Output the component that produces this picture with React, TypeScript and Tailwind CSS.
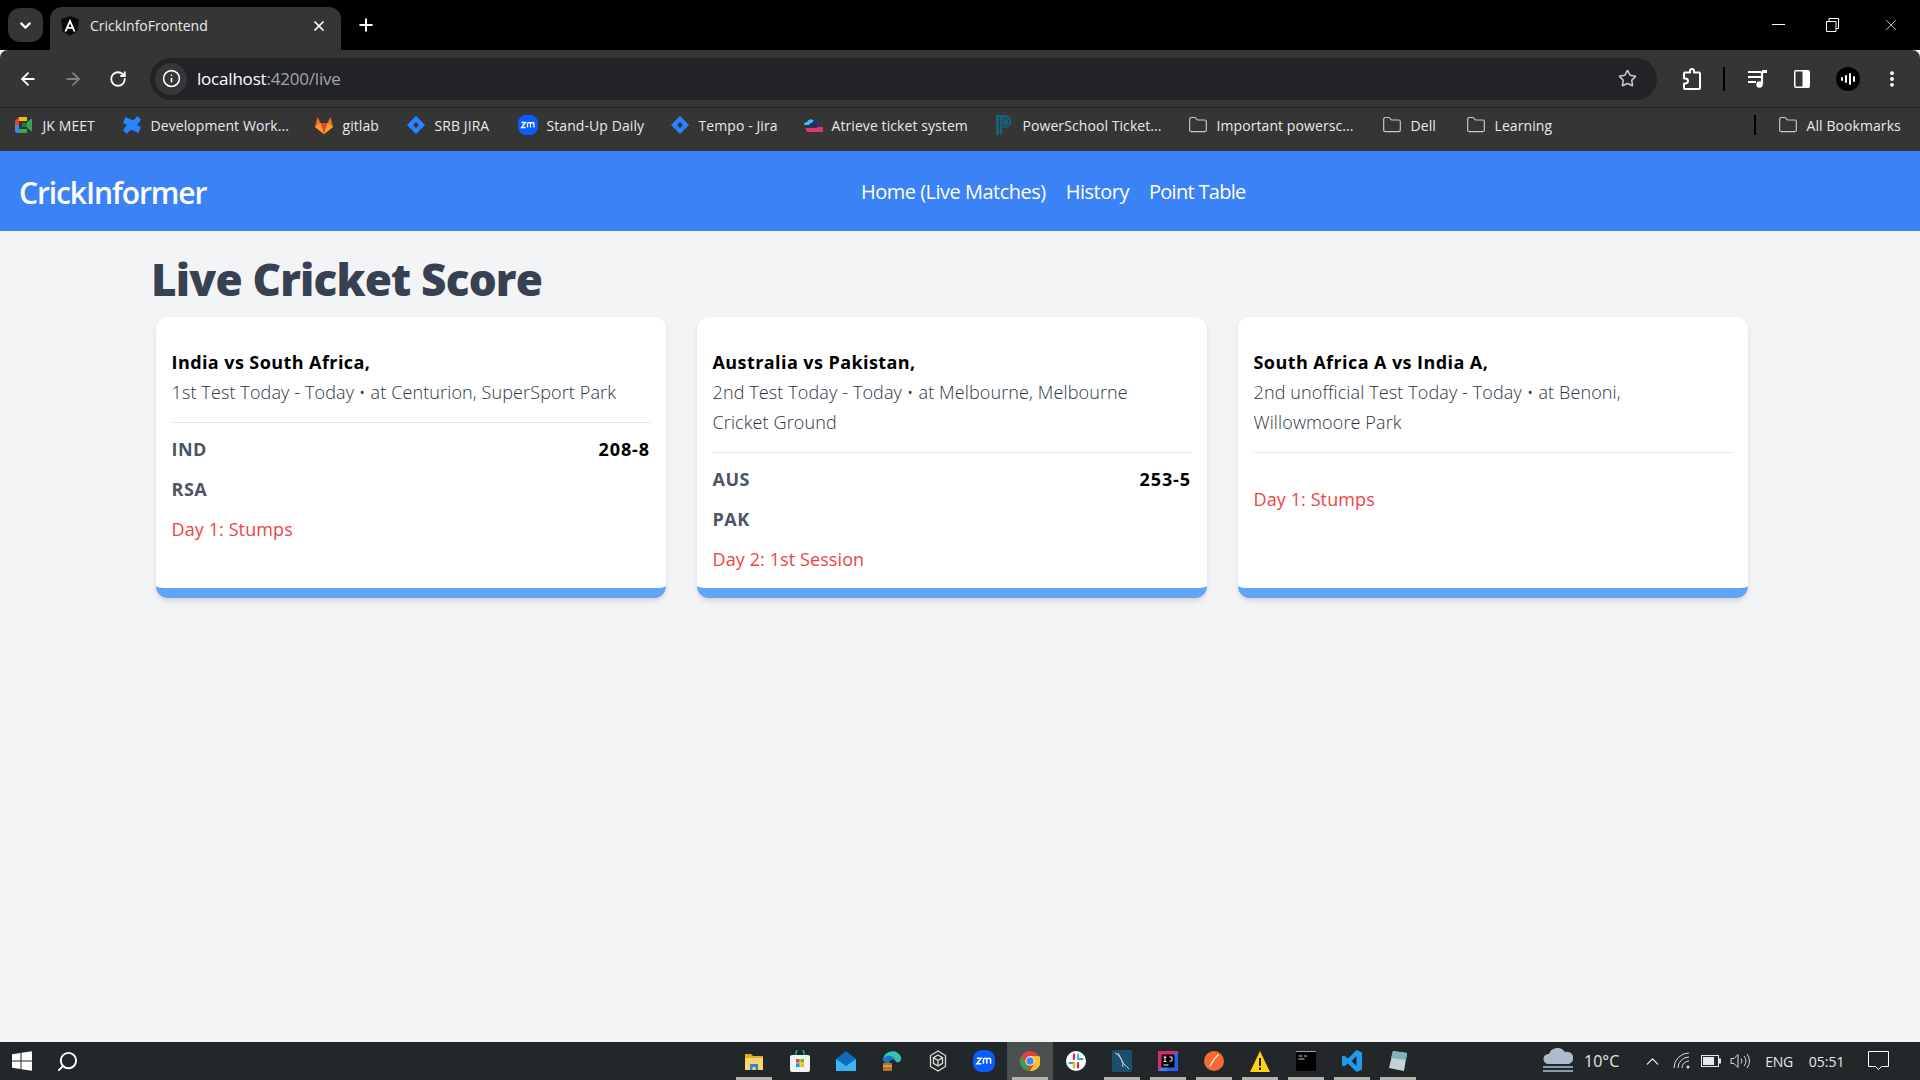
import { ChevronDown, X, Plus, ArrowLeft, ArrowRight, RotateCw, Info, Star, EllipsisVertical, Folder, Search, ChevronUp } from 'lucide-react';

type Match = {
  title: string;
  sub: string;
  teams: { name: string; score?: string }[];
  status: string;
};

const matches: Match[] = [
  {
    title: 'India vs South Africa,',
    sub: '1st Test Today - Today • at Centurion, SuperSport Park',
    teams: [{ name: 'IND', score: '208-8' }, { name: 'RSA' }],
    status: 'Day 1: Stumps',
  },
  {
    title: 'Australia vs Pakistan,',
    sub: '2nd Test Today - Today • at Melbourne, Melbourne Cricket Ground',
    teams: [{ name: 'AUS', score: '253-5' }, { name: 'PAK' }],
    status: 'Day 2: 1st Session',
  },
  {
    title: 'South Africa A vs India A,',
    sub: '2nd unofficial Test Today - Today • at Benoni, Willowmoore Park',
    teams: [],
    status: 'Day 1: Stumps',
  },
];

function MeetIcon() {
  return (
    <svg width="18" height="16" viewBox="0 0 18 16">
      <path d="M0 4 4 0h8v4H4v4H0z" fill="#ea4335" />
      <path d="M0 8h4v8H2a2 2 0 0 1-2-2z" fill="#4285f4" />
      <path d="M4 0h7a1 1 0 0 1 1 1v3H4z" fill="#fbbc04" />
      <path d="M4 12h8v3a1 1 0 0 1-1 1H4z" fill="#34a853" />
      <path d="M12 5v6l5 3.500V1.500z" fill="#34a853" />
      <path d="M4 4h8v8H4z" fill="#353535" />
      <path d="M7 6h5v4H7z" fill="#188038" />
    </svg>
  );
}

function ConfluenceIcon() {
  return (
    <svg width="20" height="20" viewBox="0 0 20 20">
      <path d="M1 15.500c3-5 5-7.500 8-7.500 2 0 5 1.500 10 4l-2.500 6c-3-1.500-6-3-7.500-3-1 0-2 1-4 4z" fill="#2684ff" />
      <path d="M19 4.500c-3 5-5 7.500-8 7.500-2 0-5-1.500-10-4l2.500-6c3 1.500 6 3 7.500 3 1 0 2-1 4-4z" fill="#2684ff" />
    </svg>
  );
}

function GitlabIcon() {
  return (
    <svg width="20" height="20" viewBox="0 0 20 20">
      <path d="M10 19 1 12 3.500 2 6.500 8h7L16.500 2 19 12z" fill="#fc6d26" />
      <path d="M10 19 6.500 8h7z" fill="#e24329" />
      <path d="M1 12 6.500 8 10 19z" fill="#fca326" />
      <path d="M19 12 13.500 8 10 19z" fill="#fca326" />
    </svg>
  );
}

function JiraIcon() {
  return (
    <svg width="18" height="18" viewBox="0 0 18 18">
      <path d="M9 0 18 9l-9 9-9-9z" fill="#2684ff" />
      <path d="M9 6l3 3-3 3-3-3z" fill="#353535" />
    </svg>
  );
}

function ZoomIcon({ size = 20 }: { size?: number }) {
  return (
    <svg width={size} height={size} viewBox="0 0 20 20">
      <rect width="20" height="20" rx="8" fill="#0b5cff" />
      <path d="M3.500 7.500h4l-4 5h4M9.500 12.500v-5M9.500 9c0-2 3-2 3 0v3.500M12.500 9c0-2 3.500-2 3.500 0v3.500" fill="none" stroke="#fff" strokeWidth="1.300" />
    </svg>
  );
}

function AtrieveIcon() {
  return (
    <svg width="20" height="16" viewBox="0 0 20 16">
      <path d="M1 8a3 3 0 0 1 3-3 4 4 0 0 1 7-1 3 3 0 0 1 4 4z" fill="#38bdf8" />
      <path d="M6 10a3 3 0 0 1 3-4 3 3 0 0 1 6 1v3z" fill="#1e2f6b" />
      <path d="M2 11h11l2-1h5v5H4z" fill="#e0356f" />
    </svg>
  );
}

function PowerSchoolIcon() {
  return (
    <svg width="18" height="22" viewBox="0 0 18 22">
      <path d="M1 1h9a6.500 6.500 0 0 1 0 13H7v7H1z" fill="#14627c" />
      <path d="M4.500 3.500V21M8 4h2a4 4 0 0 1 0 8H8z" fill="none" stroke="#353535" strokeWidth="1" />
    </svg>
  );
}

function AngularIcon() {
  return (
    <svg width="18" height="20" viewBox="0 0 16 18">
      <path d="M8 0 0 3l1.200 10.500L8 18l6.800-4.500L16 3z" fill="#0b0b0f" />
      <path d="M8 2.500 3 14h1.900l1-2.500h4.200l1 2.500H13zm-1.400 7.500L8 6.500 9.400 10z" fill="#fff" />
    </svg>
  );
}

function Bookmark({ icon, label, w }: { icon: React.ReactNode; label: string; w: string }) {
  return (
    <div className={`flex items-center h-full shrink-0 ${w}`}>
      <div className="w-5 flex justify-center shrink-0">{icon}</div>
      <span className="ml-[8.5px] text-[14px] text-[#e8eaed] whitespace-nowrap tracking-[0.08px]">{label}</span>
    </div>
  );
}

function FolderIcon() {
  return <Folder size={20} strokeWidth={1.4} className="text-[#c7c7c7]" />;
}

function TabStrip() {
  return (
    <div className="h-[50px] bg-black flex shrink-0 relative">
      <div className="ml-2 mt-2 w-[35px] h-[34px] rounded-xl bg-[#353535] flex items-center justify-center">
        <ChevronDown size={17} strokeWidth={3} className="text-white" />
      </div>
      <div className="ml-[7px] mt-[7px] w-[291px] h-[43px] rounded-t-xl bg-[#353535] flex items-center pl-[11px] pr-[14px] pb-[6px] relative">
        <AngularIcon />
        <span className="ml-[11px] text-[14px] text-[#e8eaed] flex-1">CrickInfoFrontend</span>
        <X size={16} strokeWidth={2.6} className="text-white" />
      </div>
      <Plus size={20} strokeWidth={2.4} className="ml-[15px] mt-[15px] text-white" />
      <div className="ml-auto flex text-white">
        <span className="mt-[24px] mr-[41px] w-[13px] h-px bg-white" />
        <svg width="13" height="14" viewBox="0 0 13 14" className="mt-[18px] mr-[43px]">
          <path d="M.5 3.500h9.500v10H.5zM3 3.500v-3h9.500v10H10" fill="none" stroke="#fff" />
        </svg>
        <X size={18} strokeWidth={1} className="mt-[16px] mr-5" />
      </div>
    </div>
  );
}

function Toolbar() {
  return (
    <div className="h-[57px] bg-[#353535] rounded-t-lg flex items-center shrink-0">
      <ArrowLeft size={20} strokeWidth={2.2} className="ml-[18px] text-white" />
      <ArrowRight size={20} strokeWidth={2.2} className="ml-[25px] text-[#808080]" />
      <RotateCw size={18} strokeWidth={2.4} className="ml-[26px] text-white" />
      <div className="ml-[23px] w-[1507px] h-[42px] rounded-full bg-[#222326] flex items-center pl-[5px] pr-[20px]">
        <div className="w-[32px] h-[32px] rounded-full bg-[#363739] flex items-center justify-center">
          <Info size={19} strokeWidth={2} className="text-white" />
        </div>
        <span className="ml-[10px] text-[17px] text-white tracking-[-0.2px] flex-1">
          localhost<span className="text-[#a4a5a7]">:4200/live</span>
        </span>
        <Star size={19} strokeWidth={2} className="text-[#c8c8c8]" />
      </div>
      <svg width="22" height="22" viewBox="0 0 22 22" className="ml-[23px]">
        <path d="M8 4.500h2V3a2 2 0 0 1 4 0v1.500h5a1 1 0 0 1 1 1V20a1 1 0 0 1-1 1H5a1 1 0 0 1-1-1v-4.500h1.500a2.500 2.500 0 0 0 0-5H4V5.500a1 1 0 0 1 1-1z" fill="none" stroke="#fff" strokeWidth="2" strokeLinejoin="round" />
      </svg>
      <div className="ml-[21px] w-[2px] h-6 bg-black" />
      <svg width="22" height="20" viewBox="0 0 22 20" className="ml-[22px]">
        <path d="M1 3h13M1 8h13M1 13h8" stroke="#fff" strokeWidth="2.200" />
        <path d="M15 2.500V15" stroke="#fff" strokeWidth="2.200" />
        <path d="M15 1h5v3h-5z" fill="#fff" />
        <circle cx="12.500" cy="15.500" r="3.200" fill="#fff" />
      </svg>
      <svg width="18" height="20" viewBox="0 0 18 20" className="ml-[24px]">
        <rect x="1" y="1" width="16" height="18" rx="2" fill="#fff" />
        <rect x="2.500" y="2.500" width="7" height="15" fill="#353535" />
      </svg>
      <div className="ml-[25px] w-6 h-6 rounded-full bg-black flex items-center justify-center gap-[2px]">
        <span className="w-[2px] h-[4px] bg-white rounded-full" />
        <span className="w-[2px] h-[8px] bg-white rounded-full" />
        <span className="w-[2px] h-[12px] bg-white rounded-full" />
        <span className="w-[2px] h-[6px] bg-white rounded-full" />
      </div>
      <EllipsisVertical size={20} strokeWidth={2.6} className="ml-[22px] text-white" />
    </div>
  );
}

function BookmarksBar() {
  return (
    <div className="h-[44px] bg-[#353535] border-t border-[#232323] flex items-center pl-[14px] pb-[9px] shrink-0">
      <Bookmark icon={<MeetIcon />} label="JK MEET" w="w-[108px]" />
      <Bookmark icon={<ConfluenceIcon />} label="Development Work..." w="w-[192px]" />
      <Bookmark icon={<GitlabIcon />} label="gitlab" w="w-[92px]" />
      <Bookmark icon={<JiraIcon />} label="SRB JIRA" w="w-[112px]" />
      <Bookmark icon={<ZoomIcon />} label="Stand-Up Daily" w="w-[152px]" />
      <Bookmark icon={<JiraIcon />} label="Tempo - Jira" w="w-[133px]" />
      <Bookmark icon={<AtrieveIcon />} label="Atrieve ticket system" w="w-[191px]" />
      <Bookmark icon={<PowerSchoolIcon />} label="PowerSchool Ticket..." w="w-[194px]" />
      <Bookmark icon={<FolderIcon />} label="Important powersc..." w="w-[194px]" />
      <Bookmark icon={<FolderIcon />} label="Dell" w="w-[84px]" />
      <Bookmark icon={<FolderIcon />} label="Learning" w="w-[288px]" />
      <div className="w-[2px] h-5 bg-black shrink-0" />
      <div className="ml-[22px] h-full">
        <Bookmark icon={<FolderIcon />} label="All Bookmarks" w="w-[121px]" />
      </div>
    </div>
  );
}

function MatchCard({ match }: { match: Match }) {
  return (
    <div className="bg-white rounded-xl border-b-[10px] border-[#60a5fa] shadow-md pl-[15.5px] pr-4 pt-[30px] pb-[9px]">
      <h3 className="text-[18px] leading-[30px] font-bold text-black tracking-[0.42px]">{match.title}</h3>
      <p className="text-[18px] leading-[30px] font-light text-[#2b3544] tracking-[0.12px] pr-5">{match.sub}</p>
      <div className="mt-[15px] border-t-[1.500px] border-[#e5e7eb] pt-1.5">
        {match.teams.map((team) => (
          <div key={team.name} className="h-10 flex items-center justify-between text-[18px] font-bold">
            <span className="text-[#4b5563] tracking-[0.5px]">{team.name}</span>
            {team.score && <span className="text-black tracking-[0.9px]">{team.score}</span>}
          </div>
        ))}
        {match.teams.length === 0 && <div className="h-5" />}
        <div className="h-10 flex items-center text-[18px] font-normal text-[#ef4444] tracking-[0.1px]">{match.status}</div>
      </div>
    </div>
  );
}

function TrayIcon({ children, x }: { children: React.ReactNode; x: string }) {
  return <div className={`w-[46px] h-full flex items-center justify-center relative shrink-0 ${x}`}>{children}</div>;
}

function Underline() {
  return <span className="absolute bottom-0 left-[5px] right-[5px] h-[3px] bg-[#b3b3ae]" />;
}

function Taskbar() {
  return (
    <div className="h-[38px] bg-[#222829] flex items-center shrink-0">
      <svg width="20" height="20" viewBox="0 0 20 20" className="ml-[12px]">
        <path d="M0 3.200 8.500 2v7.500H0zM9.500 1.800 20 .2v9.300H9.500zM0 10.500h8.500V18L0 16.800zM9.500 10.500H20v9.300L9.500 18.200z" fill="#fff" />
      </svg>
      <Search size={23} strokeWidth={2} className="ml-[24px] -scale-x-100 text-white" />
      <div className="ml-[652px] h-full flex">
        <TrayIcon x="">
          <svg width="20" height="19" viewBox="0 0 20 19">
            <path d="M1 2h6l2 2h10v3H1z" fill="#e8a92c" />
            <path d="M1 6h18v12H1z" fill="#fbd46d" />
            <path d="M6 18v-6h8v6h-2.500v-3h-3v3z" fill="#2a87d8" />
          </svg>
          <Underline />
        </TrayIcon>
        <TrayIcon x="">
          <svg width="20" height="22" viewBox="0 0 20 22">
            <path d="M6 6V3a4 4 0 0 1 8 0v3" fill="none" stroke="#22b8d6" strokeWidth="1.300" />
            <rect y="5" width="20" height="17" rx="2" fill="#f3f3f3" />
            <path d="M6 9h3.700v3.700H6z" fill="#f25022" />
            <path d="M10.300 9H14v3.700h-3.700z" fill="#7fba00" />
            <path d="M6 13.300h3.700V17H6z" fill="#00a4ef" />
            <path d="M10.300 13.300H14V17h-3.700z" fill="#ffb900" />
          </svg>
        </TrayIcon>
        <TrayIcon x="">
          <svg width="20" height="20" viewBox="0 0 20 20">
            <path d="M0 8 10 0l10 8v11H0z" fill="#0f6cbd" />
            <path d="M0 8l10 7 10-7v12H0z" fill="#3bb4f0" />
          </svg>
        </TrayIcon>
        <TrayIcon x="">
          <svg width="20" height="22" viewBox="0 0 20 22">
            <path d="M1 9a9.500 9.500 0 0 1 18-2c1 4-2 6-5 5-1-3-5-5-8-3-2 1-4 1-5 0z" fill="#35c1b1" />
            <path d="M1 9c3-5 10-4 12 1-3-1-6 0-6 4-4-1-6-2-6-5z" fill="#1976c9" />
            <rect x="1" y="13" width="9" height="8" rx="1" fill="#b8722c" />
            <path d="M1 16h9" stroke="#f2c66d" />
          </svg>
        </TrayIcon>
        <TrayIcon x="">
          <svg width="18" height="22" viewBox="0 0 18 22" fill="none" stroke="#d9d9d9" strokeWidth="1.300">
            <path d="M9 1 16.500 5.500v11L9 21 1.500 16.500v-11z" />
            <path d="M9 5l4.500 2.600v5.800L9 16l-4.500-2.600V7.600zM4.500 7.600 9 10.500l4.500-2.900M9 10.500V16" />
          </svg>
        </TrayIcon>
        <TrayIcon x="">
          <ZoomIcon size={22} />
        </TrayIcon>
        <TrayIcon x="bg-[#4a5050]">
          <svg width="20" height="20" viewBox="0 0 20 20">
            <circle cx="10" cy="10" r="10" fill="#db4437" />
            <path d="M10 5h9.300A10 10 0 0 1 10 20l4.500-8z" fill="#fbc02d" />
            <path d="M1.300 5 6 12.500 10 20A10 10 0 0 1 1.300 5z" fill="#3d9c47" />
            <circle cx="10" cy="10" r="4.700" fill="#fff" />
            <circle cx="10" cy="10" r="3.700" fill="#4285f4" />
          </svg>
          <Underline />
        </TrayIcon>
        <TrayIcon x="">
          <svg width="20" height="20" viewBox="0 0 20 20">
            <circle cx="10" cy="10" r="10" fill="#fff" />
            <path d="M8 3.500v4.500M12 12v4.500" stroke="#e01e5a" strokeWidth="2.200" strokeLinecap="round" />
            <path d="M3.500 12H8M12 8h4.500" stroke="#2eb67d" strokeWidth="2.200" strokeLinecap="round" />
            <path d="M12 3.500V8" stroke="#36c5f0" strokeWidth="2.200" strokeLinecap="round" />
            <path d="M8 12v4.500" stroke="#ecb22e" strokeWidth="2.200" strokeLinecap="round" />
          </svg>
        </TrayIcon>
        <TrayIcon x="">
          <svg width="20" height="22" viewBox="0 0 20 22">
            <rect width="20" height="22" rx="2" fill="#1f4e6c" />
            <path d="M3 3c6 3 7 9 9 11 2 2 3 3 5 5M6 3c3 5 5 9 5 14" fill="none" stroke="#c7d6df" strokeWidth="1" />
          </svg>
          <Underline />
        </TrayIcon>
        <TrayIcon x="">
          <svg width="20" height="20" viewBox="0 0 20 20">
            <rect width="20" height="20" fill="#3b82f6" />
            <path d="M0 0h20L0 20z" fill="#d62b6d" />
            <path d="M20 0v20H8z" fill="#2563eb" />
            <rect x="3.500" y="3.500" width="13" height="13" fill="#000" />
            <path d="M5.500 6h3M7 6v4.500M5.500 10.500h3M11.500 6h2.500v3.500c0 1-2 1-2.500 .5M5.500 14h5" fill="none" stroke="#fff" strokeWidth="1" />
          </svg>
          <Underline />
        </TrayIcon>
        <TrayIcon x="">
          <svg width="20" height="20" viewBox="0 0 20 20">
            <circle cx="10" cy="10" r="10" fill="#f76935" />
            <path d="M15 4c-3 2-6 7-8 11l-2 1 1-2c2-4 5-8 8-11z" fill="#fff" />
          </svg>
          <Underline />
        </TrayIcon>
        <TrayIcon x="">
          <svg width="20" height="21" viewBox="0 0 20 21">
            <path d="M10 0 20 21H0z" fill="#fcd116" />
            <path d="M9 7h2v8H9zM9 16.500h2V19H9z" fill="#222" />
          </svg>
          <Underline />
        </TrayIcon>
        <TrayIcon x="">
          <svg width="20" height="20" viewBox="0 0 20 20">
            <rect width="20" height="20" rx="1" fill="#000" />
            <path d="M0 .5h20" stroke="#9aa0a0" />
            <path d="M2.500 5h4M8 5h3M2.500 8h6" stroke="#c9c9c9" />
          </svg>
          <Underline />
        </TrayIcon>
        <TrayIcon x="">
          <svg width="20" height="22" viewBox="0 0 20 22">
            <path d="M14.500 0 20 2.500v17L14.500 22 6 13.500 2 16.500 0 15.500v-9L2 5.500 6 8.500zM14.500 6 9.500 11l5 5z" fill="#1f9cf0" />
          </svg>
          <Underline />
        </TrayIcon>
        <TrayIcon x="">
          <svg width="20" height="22" viewBox="0 0 20 22">
            <path d="M5 1 19 3l-3 18L1 18z" fill="#c3d4d6" />
            <path d="M5 1 19 3l-1 7-15-2z" fill="#7fb2bf" />
          </svg>
          <Underline />
        </TrayIcon>
      </div>
      <svg width="30" height="26" viewBox="0 0 30 26" className="ml-[122px]">
        <path d="M5 16a5 5 0 0 1 1-10 9 9 0 0 1 16-2 6 6 0 0 1 4 12z" fill="#aebbcf" />
        <path d="M0 19h30M0 23h30" stroke="#8b99ac" strokeWidth="2" />
      </svg>
      <span className="ml-[11px] text-[16px] text-[#e6e6e6]">10°C</span>
      <ChevronUp size={21} strokeWidth={1.2} className="ml-[23px] text-white" />
      <svg width="18" height="18" viewBox="0 0 18 18" fill="none" stroke="#dcdcdc" strokeWidth="1" className="ml-[10px]">
        <path d="M1 16A15 15 0 0 1 16 1M5 16A11 11 0 0 1 16 5M9 16a7 7 0 0 1 7-7" />
        <circle cx="15" cy="15" r="1.500" fill="#dcdcdc" stroke="none" />
      </svg>
      <svg width="20" height="12" viewBox="0 0 20 12" className="ml-[10px]">
        <rect x=".5" y=".5" width="17" height="11" fill="none" stroke="#e8e8e8" />
        <rect x="2" y="2" width="11" height="8" fill="#e8e8e8" />
        <rect x="18" y="3.500" width="2" height="5" fill="#e8e8e8" />
      </svg>
      <svg width="20" height="16" viewBox="0 0 20 16" fill="none" stroke="#d8d8d8" strokeWidth="1" className="ml-[9px]">
        <path d="M1 5.500h3L8 1.500v13l-4-4H1z" />
        <path d="M11 5.500a4 4 0 0 1 0 5M14 3a7.500 7.500 0 0 1 0 10M17 1a11 11 0 0 1 0 14" />
      </svg>
      <span className="ml-[15px] text-[14px] text-[#e6e6e6] tracking-[-0.3px]">ENG</span>
      <span className="ml-[16px] text-[14px] text-[#e6e6e6]">05:51</span>
      <svg width="21" height="20" viewBox="0 0 21 20" className="ml-[23px]">
        <path d="M.5 .5h20v15h-7l-3 3-3-3h-7z" fill="none" stroke="#fff" />
      </svg>
    </div>
  );
}

export default function App() {
  return (
    <div className="h-screen w-full flex flex-col overflow-hidden bg-[#f3f4f6] font-['Open_Sans',sans-serif]">
      <TabStrip />
      <Toolbar />
      <BookmarksBar />
      <nav className="h-20 bg-[#3b82f6] flex items-center pl-[19px] pt-[2px] text-white shrink-0">
        <div className="w-[842px] text-[30px] font-semibold tracking-[-1.1px]">CrickInformer</div>
        <div className="flex text-[20px] tracking-[-0.5px]">
          <a className="mr-5">Home (Live Matches)</a>
          <a className="mr-5">History</a>
          <a className="tracking-[-0.7px]">Point Table</a>
        </div>
      </nav>
      <main className="flex-1 pl-[151px] pt-[18px]">
        <h1 className="text-[44px] leading-[60px] font-extrabold text-[#374151] tracking-[-0.8px] mb-2">Live Cricket Score</h1>
        <div className="grid grid-cols-[repeat(3,510px)] gap-x-[31px] ml-[5px]">
          {matches.map((m) => (
            <MatchCard key={m.title} match={m} />
          ))}
        </div>
      </main>
      <Taskbar />
    </div>
  );
}
